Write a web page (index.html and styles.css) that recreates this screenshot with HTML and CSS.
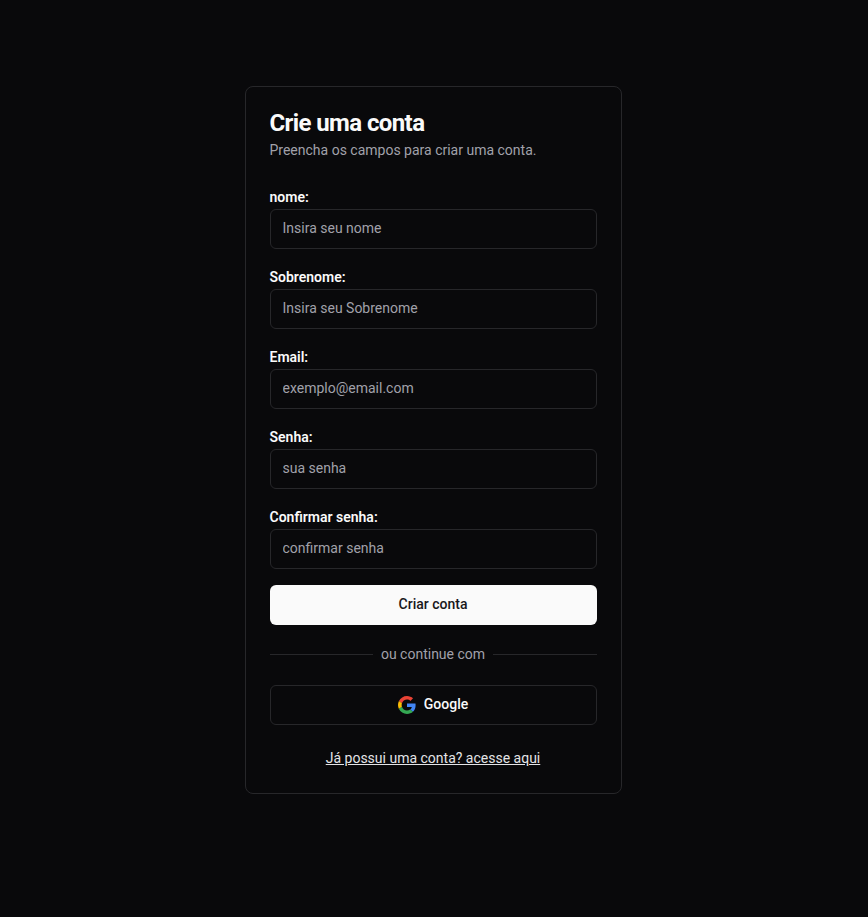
FILE: index.html
```html
<!DOCTYPE html>
<html lang="pt-BR">
<head>
<meta charset="utf-8">
<title>Crie uma conta</title>
<link rel="stylesheet" href="styles.css">
</head>
<body>
<main class="card">
  <header class="card-header">
    <h1>Crie uma conta</h1>
    <p>Preencha os campos para criar uma conta.</p>
  </header>
  <form class="form">
    <div class="field"><label for="nome">nome:</label><input id="nome" type="text" placeholder="Insira seu nome"></div>
    <div class="field"><label for="sobrenome">Sobrenome:</label><input id="sobrenome" type="text" placeholder="Insira seu Sobrenome"></div>
    <div class="field"><label for="email">Email:</label><input id="email" type="email" placeholder="exemplo@email.com"></div>
    <div class="field"><label for="senha">Senha:</label><input id="senha" type="password" placeholder="sua senha"></div>
    <div class="field"><label for="confirmar">Confirmar senha:</label><input id="confirmar" type="password" placeholder="confirmar senha"></div>
    <button class="btn btn-primary" type="submit">Criar conta</button>
  </form>
  <div class="divider"><span>ou continue com</span></div>
  <button class="btn btn-outline" type="button">
    <svg class="google" viewBox="0 0 48 48" aria-hidden="true">
      <path fill="#EA4335" d="M24 9.5c3.54 0 6.71 1.22 9.21 3.6l6.85-6.85C35.9 2.38 30.47 0 24 0 14.62 0 6.51 5.38 2.56 13.22l7.98 6.19C12.43 13.72 17.74 9.5 24 9.5z"/>
      <path fill="#4285F4" d="M46.98 24.55c0-1.57-.15-3.09-.38-4.55H24v9.02h12.94c-.58 2.96-2.26 5.48-4.78 7.18l7.73 6c4.51-4.18 7.09-10.36 7.09-17.65z"/>
      <path fill="#FBBC05" d="M10.53 28.59c-.48-1.45-.76-2.99-.76-4.59s.27-3.14.76-4.59l-7.98-6.19C.92 16.46 0 20.12 0 24c0 3.88.92 7.54 2.56 10.78l7.97-6.19z"/>
      <path fill="#34A853" d="M24 48c6.48 0 11.93-2.13 15.89-5.81l-7.73-6c-2.15 1.45-4.92 2.3-8.16 2.3-6.26 0-11.57-4.22-13.47-9.91l-7.98 6.19C6.51 42.62 14.62 48 24 48z"/>
    </svg>
    <span>Google</span>
  </button>
  <a class="login-link" href="#">Já possui uma conta? acesse aqui</a>
</main>
</body>
</html>
```
FILE: styles.css
```css
* { box-sizing: border-box; }
body {
  margin: 0;
  min-height: 917px;
  background: #09090b;
  color: #fafafa;
  font-family: Roboto, sans-serif;
  font-size: 14px;
  line-height: 20px;
}
.card {
  display: flex;
  flex-direction: column;
  width: 377px;
  height: 708px;
  margin: 86px 0 0 244.5px;
  padding: 24px;
  border: 1px solid #27272a;
  border-radius: 8px;
}
.card-header { margin-bottom: 25px; }
h1 {
  margin: 0 0 5px;
  font-size: 24px;
  line-height: 24px;
  font-weight: 700;
  letter-spacing: -0.6px;
}
p { margin: 0; color: #a1a1aa; }
.form { display: flex; flex-direction: column; gap: 16px; }
.field { display: flex; flex-direction: column; height: 64px; }
.field label { height: 24px; padding-top: 5px; line-height: 14px; font-weight: 600; }
.field input {
  width: 100%;
  height: 40px;
  padding: 7px 12px 9px;
  border: 1px solid #27272a;
  border-radius: 6px;
  background: #09090b;
  color: #fafafa;
  font: inherit;
}
.field input::placeholder { color: #a1a1aa; opacity: 1; }
.btn {
  display: flex;
  align-items: center;
  justify-content: center;
  gap: 8px;
  flex: none;
  height: 40px;
  padding: 0 16px 2px;
  border-radius: 6px;
  font: inherit;
  font-weight: 500;
}
.btn-primary { border: 0; background: #fafafa; color: #18181b; }
.btn-outline { border: 1px solid #27272a; background: #09090b; color: #fafafa; }
.divider { display: flex; align-items: center; gap: 8px; margin: 19px 0 21px; color: #a1a1aa; }
.divider::before, .divider::after { content: ""; flex: 1; height: 1px; background: #27272a; }
.google { width: 18px; height: 18px; margin-top: 2px; }
.login-link { align-self: center; margin-top: 23px; color: #e4e4e7; text-decoration: underline; }
```
